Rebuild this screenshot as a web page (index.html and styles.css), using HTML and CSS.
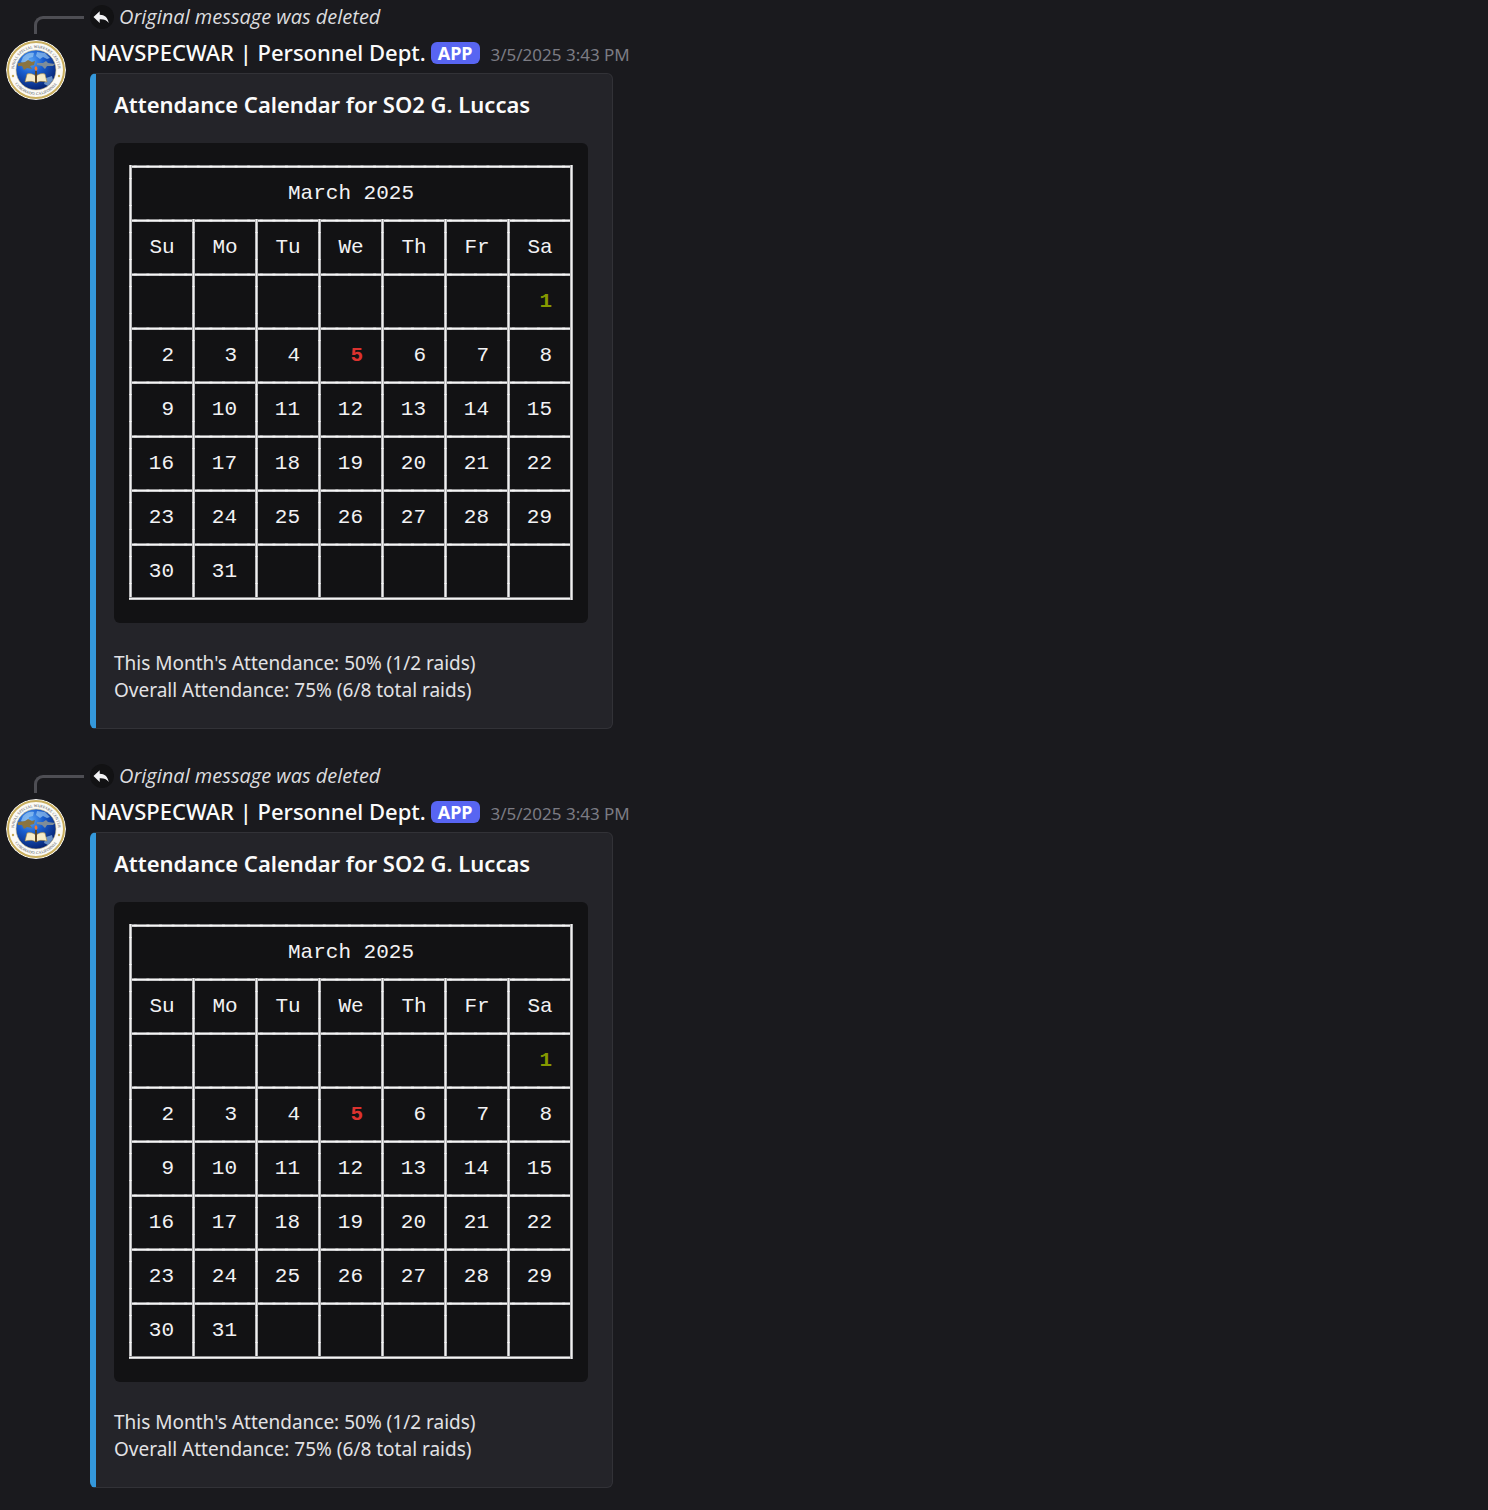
FILE: index.html
```html
<!DOCTYPE html>
<html lang="en">
<head>
<meta charset="utf-8">
<title>Attendance</title>
<link rel="stylesheet" href="styles.css">
</head>
<body>
<svg class="defs" aria-hidden="true">
  <defs>
    <radialGradient id="globe" cx="36%" cy="28%" r="80%">
      <stop offset="0" stop-color="#5aa6f5"/>
      <stop offset=".4" stop-color="#1a5fd0"/>
      <stop offset="1" stop-color="#041b66"/>
    </radialGradient>
    <path id="arc-top" d="M8 30a22 22 0 0 1 44 0"/>
    <path id="arc-bottom" d="M5 30a25 25 0 0 0 50 0"/>
    <symbol id="seal" viewBox="0 0 60 60">
      <circle cx="30" cy="30" r="30" fill="#fbfaf6"/>
      <circle cx="30" cy="30" r="28" fill="#fbfaf6" stroke="#c9ae5e" stroke-width="2"/>
      <circle cx="30" cy="30" r="20" fill="url(#globe)" stroke="#d8c68c" stroke-width=".6"/>
      <path d="M17 17c3-4 8-5 11-4l-1 4-4 1-1 4-4 2-3-2zM31 12l8 1 5 5-3 1-4-2-3 2-4-3zM40 38l6-2 1 4-5 6-4-2z" fill="#a9d3f5" opacity=".6"/>
      <path d="M12 23l7-1 3-2 4 2 3-1-1 4-4 1 2 3-5-1-3 2-2-4-4 0z" fill="#8a7440"/>
      <path d="M31 23l6 0 3-2 2 2 7 1-2 2-6 0-2 3-3-3-5-1z" fill="#7f8d98"/>
      <path d="M21 34c4-1 6 0 9 2 3-2 5-3 9-2l2 8c-5-1-8-1-11 1-3-2-6-2-11-1z" fill="#f6ecc9" stroke="#a5843a" stroke-width=".6"/>
      <path d="M29 31h2v12h-2z" fill="#5d4523"/>
      <path d="M30 26c2 2 2 4 0 5-2-2-2-3 0-5z" fill="#f47a2c"/>
      <circle cx="7" cy="36" r="1.2" fill="#c5a956"/>
      <circle cx="53" cy="36" r="1.2" fill="#c5a956"/>
      <text class="seal-text"><textPath href="#arc-top" startOffset="50%">NAVAL SPECIAL WARFARE CENTER</textPath></text>
      <text class="seal-text"><textPath href="#arc-bottom" startOffset="50%">CORONADO, CALIFORNIA</textPath></text>
    </symbol>
    <symbol id="reply" viewBox="0 0 24 24">
      <path d="M10.200 6.800v3.400c5 .2 8.100 2.700 9 8.200-2.200-2.900-5-3.800-9-3.600v3.600L4 12.400z" transform="translate(-.5 -.5)" fill="#f2f2f4"/>
    </symbol>
  </defs>
</svg>
<main class="chat">
  <article class="message">
    <span class="spine"></span>
    <div class="reply">
      <svg class="reply-icon" aria-hidden="true"><use href="#reply"/></svg>
      <em>Original message was deleted</em>
    </div>
    <svg class="avatar" role="img" aria-label="Naval Special Warfare Center"><use href="#seal"/></svg>
    <div class="body">
      <header class="byline">
        <span class="author">NAVSPECWAR | Personnel Dept.</span>
        <span class="badge">APP</span>
        <time class="time" datetime="2025-03-05T15:43">3/5/2025 3:43 PM</time>
      </header>
      <section class="embed">
        <h2 class="title">Attendance Calendar for SO2 G. Luccas</h2>
        <div class="code">
          <table class="calendar">
            <thead>
              <tr><th class="month" colspan="7">March 2025</th></tr>
              <tr><th>Su</th><th>Mo</th><th>Tu</th><th>We</th><th>Th</th><th>Fr</th><th>Sa</th></tr>
            </thead>
            <tbody>
              <tr><td></td><td></td><td></td><td></td><td></td><td></td><td class="present">1</td></tr>
              <tr><td>2</td><td>3</td><td>4</td><td class="absent">5</td><td>6</td><td>7</td><td>8</td></tr>
              <tr><td>9</td><td>10</td><td>11</td><td>12</td><td>13</td><td>14</td><td>15</td></tr>
              <tr><td>16</td><td>17</td><td>18</td><td>19</td><td>20</td><td>21</td><td>22</td></tr>
              <tr><td>23</td><td>24</td><td>25</td><td>26</td><td>27</td><td>28</td><td>29</td></tr>
              <tr><td>30</td><td>31</td><td></td><td></td><td></td><td></td><td></td></tr>
            </tbody>
          </table>
        </div>
        <p class="summary">This Month's Attendance: 50% (1/2 raids)<br>Overall Attendance: 75% (6/8 total raids)</p>
      </section>
    </div>
  </article>
  <article class="message">
    <span class="spine"></span>
    <div class="reply">
      <svg class="reply-icon" aria-hidden="true"><use href="#reply"/></svg>
      <em>Original message was deleted</em>
    </div>
    <svg class="avatar" role="img" aria-label="Naval Special Warfare Center"><use href="#seal"/></svg>
    <div class="body">
      <header class="byline">
        <span class="author">NAVSPECWAR | Personnel Dept.</span>
        <span class="badge">APP</span>
        <time class="time" datetime="2025-03-05T15:43">3/5/2025 3:43 PM</time>
      </header>
      <section class="embed">
        <h2 class="title">Attendance Calendar for SO2 G. Luccas</h2>
        <div class="code">
          <table class="calendar">
            <thead>
              <tr><th class="month" colspan="7">March 2025</th></tr>
              <tr><th>Su</th><th>Mo</th><th>Tu</th><th>We</th><th>Th</th><th>Fr</th><th>Sa</th></tr>
            </thead>
            <tbody>
              <tr><td></td><td></td><td></td><td></td><td></td><td></td><td class="present">1</td></tr>
              <tr><td>2</td><td>3</td><td>4</td><td class="absent">5</td><td>6</td><td>7</td><td>8</td></tr>
              <tr><td>9</td><td>10</td><td>11</td><td>12</td><td>13</td><td>14</td><td>15</td></tr>
              <tr><td>16</td><td>17</td><td>18</td><td>19</td><td>20</td><td>21</td><td>22</td></tr>
              <tr><td>23</td><td>24</td><td>25</td><td>26</td><td>27</td><td>28</td><td>29</td></tr>
              <tr><td>30</td><td>31</td><td></td><td></td><td></td><td></td><td></td></tr>
            </tbody>
          </table>
        </div>
        <p class="summary">This Month's Attendance: 50% (1/2 raids)<br>Overall Attendance: 75% (6/8 total raids)</p>
      </section>
    </div>
  </article>
</main>
</body>
</html>
```
FILE: styles.css
```css
* { box-sizing: border-box; }

body {
  margin: 0;
  background: #1a1a1e;
  color: #e2e2e5;
  font-family: "Noto Sans", "Open Sans", sans-serif;
  font-size: 19px;
  line-height: 27px;
}

.defs {
  position: absolute;
  width: 0;
  height: 0;
}

.chat {
  display: flex;
  flex-direction: column;
  gap: 35px;
  padding: 5px 6px 22px;
}

.message {
  display: grid;
  grid-template-columns: 60px 1fr;
  grid-template-rows: 24px auto;
  column-gap: 24px;
}

/* Elbow that joins the avatar to the replied-to line */
.spine {
  height: 18px;
  margin: 11px -18px 0 28px;
  border: solid #4e4e54;
  border-width: 3px 0 0 3px;
  border-top-left-radius: 9px;
}

.reply {
  display: flex;
  align-items: center;
  gap: 5px;
  font-family: "Open Sans", "Noto Sans", sans-serif;
  font-size: 20px;
  line-height: 24px;
  color: #dcdcdf;
}

.reply-icon {
  width: 24px;
  height: 24px;
  border-radius: 50%;
  background: #121214;
}

.avatar {
  width: 60px;
  height: 60px;
  margin-top: 11px;
  border-radius: 50%;
}

.seal-text {
  font-family: "Liberation Serif", serif;
  font-size: 4px;
  fill: #4a4a55;
  text-anchor: middle;
}

.byline {
  display: flex;
  align-items: baseline;
  height: 44px;
  padding-top: 8px;
  line-height: 30px;
}

.author {
  font-size: 22px;
  font-weight: 500;
  color: #fbfbfb;
}

.badge {
  align-self: flex-start;
  margin: 5px 11px 0 5px;
  padding: 0 7px;
  border-radius: 6px;
  background: #5865f2;
  color: #fff;
  font-size: 18px;
  font-weight: 700;
  line-height: 22px;
}

.time {
  font-size: 17px;
  color: #7c7c84;
}

.embed {
  width: fit-content;
  padding: 17px 24px 24px 18px;
  border: 1px solid #323237;
  border-left: 6px solid #3498db;
  border-radius: 6px;
  background: #242429;
}

.title {
  margin: 0 0 25px;
  font-size: 22px;
  font-weight: 600;
  line-height: 27px;
  color: #fbfbfb;
}

.code {
  padding: 22px 15px 23px;
  border-radius: 6px;
  background: #121214;
}

/* Grid lines are drawn on the top and left of each cell; the table
   itself closes the right and bottom edges. */
.calendar {
  --across: linear-gradient(#8e8e90 1px, #f4f4f4 1px 2px, #c8c8ca 2px);
  --down: linear-gradient(90deg, #b4b4b6 1px, #f0f0f0 1px 2px, #b4b4b6 2px);
  --seam-across: linear-gradient(90deg, transparent 40%, #ffffff40 40% 60%, transparent 60%);
  --seam-down: linear-gradient(transparent 47%, #ffffff80 47% 53%, transparent 53%);
  --seam-width: 20%;
  border-spacing: 0;
  padding: 0 3px 3px 0;
  background:
    var(--down) 100% 0 / 3px 100% no-repeat,
    var(--across) 0 100% / 100% 3px no-repeat;
  font-family: "Liberation Mono", monospace;
  font-size: 21px;
  line-height: 48px;
  color: #f2f2f4;
}

.calendar th,
.calendar td {
  width: 63px;
  height: 54px;
  padding: 5px 0 1px 3px;
  font-weight: 400;
  text-align: center;
  background:
    var(--seam-across) 0 0 / var(--seam-width) 3px repeat-x,
    var(--seam-down) 0 0 / 3px 50% repeat-y,
    var(--down) 0 0 / 3px 100% no-repeat,
    var(--across) 0 0 / 100% 3px no-repeat;
}

.calendar td {
  padding-right: 18px;
  text-align: right;
}

.calendar .month { --seam-width: calc(100% / 35); }

.calendar .present {
  color: #859900;
  font-weight: 700;
}

.calendar .absent {
  color: #dc322f;
  font-weight: 700;
}

.summary {
  margin: 27px 0 0;
}
```
